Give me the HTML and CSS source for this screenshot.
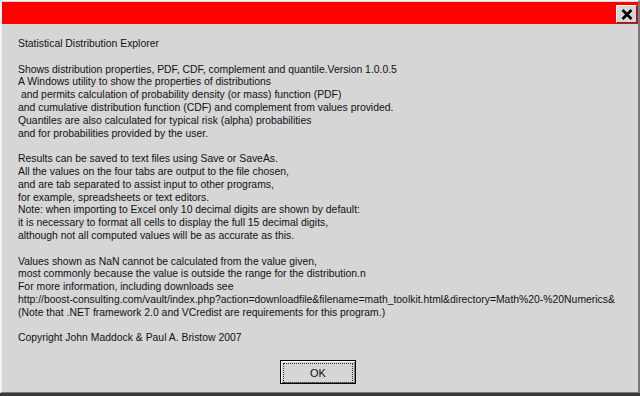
FILE: index.html
```html
<!DOCTYPE html>
<html lang="en">
<head>
    <meta charset="UTF-8">
    <title>About Statistical Distribution Explorer</title>
    <link rel="stylesheet" href="styles.css">
</head>
<body>
    <div class="window">
        <div class="titlebar">
            <button class="close-btn" aria-label="Close">
                <svg width="12" height="11" viewBox="0 0 12 11">
                    <path d="M1.5 1 L10.5 10 M10.5 1 L1.5 10" stroke="#000" stroke-width="2.6" fill="none"/>
                </svg>
            </button>
        </div>

        <div class="content">
            <p>Statistical Distribution Explorer</p>

            <p>Shows distribution properties, PDF, CDF, complement and quantile.Version 1.0.0.5<br>
            A Windows utility to show the properties of distributions<br>
            &nbsp;and permits calculation of probability density (or mass) function (PDF)<br>
            and cumulative distribution function (CDF) and complement from values provided.<br>
            Quantiles are also calculated for typical risk (alpha) probabilities<br>
            and for probabilities provided by the user.</p>

            <p>Results can be saved to text files using Save or SaveAs.<br>
            All the values on the four tabs are output to the file chosen,<br>
            and are tab separated to assist input to other programs,<br>
            for example, spreadsheets or text editors.<br>
            Note: when importing to Excel only 10 decimal digits are shown by default:<br>
            it is necessary to format all cells to display the full 15 decimal digits,<br>
            although not all computed values will be as accurate as this.</p>

            <p>Values shown as NaN cannot be calculated from the value given,<br>
            most commonly because the value is outside the range for the distribution.n<br>
            For more information, including downloads see<br>
            http://boost-consulting.com/vault/index.php?action=downloadfile&amp;filename=math_toolkit.html&amp;directory=Math%20-%20Numerics&amp;<br>
            (Note that .NET framework 2.0 and VCredist are requirements for this program.)</p>

            <p>Copyright John Maddock &amp; Paul A. Bristow 2007</p>
        </div>

        <div class="actions">
            <button class="ok-btn"><span>OK</span></button>
        </div>
    </div>
</body>
</html>
```

FILE: styles.css
```css
:root {
    --face-color: #d6d6d6;
    --light-edge: #f4f4f4;
    --dark-edge: #7a7a7a;
    --title-color: #ff0000;
    --text-color: #111111;
}
html, body {
    margin: 0;
    padding: 0;
}
body {
    width: 640px;
    height: 396px;
    overflow: hidden;
    background: #3a3a3a;
    font-family: 'Liberation Sans', Arial, sans-serif;
    color: var(--text-color);
}
.window {
    box-sizing: border-box;
    width: 640px;
    height: 393px;
    background-color: var(--face-color);
    border-left: 2px solid var(--light-edge);
    border-top: 1px solid var(--light-edge);
    border-right: 2px solid var(--dark-edge);
    border-bottom: 1px solid var(--dark-edge);
    display: flex;
    flex-direction: column;
}
.titlebar {
    height: 22px;
    margin: 1px 0 0 0;
    background-color: var(--title-color);
    display: flex;
    justify-content: flex-end;
    align-items: center;
    padding-right: 1px;
}
.close-btn {
    box-sizing: border-box;
    width: 21px;
    height: 18px;
    margin-top: 2px;
    padding: 0;
    background-color: var(--face-color);
    border: 1px solid;
    border-color: #ffffff #404040 #404040 #ffffff;
    display: flex;
    align-items: center;
    justify-content: center;
}
.content {
    padding: 14px 0 0 16px;
    font-size: 10.4px;
    line-height: 12.8px;
    white-space: nowrap;
}
.content p {
    margin: 0 0 12.8px 0;
}
.actions {
    display: flex;
    justify-content: center;
    padding-top: 2px;
    padding-right: 4px;
}
.ok-btn {
    box-sizing: border-box;
    width: 76px;
    height: 24px;
    padding: 2px;
    background-color: var(--face-color);
    border: 1px solid #000000;
    box-shadow: inset 1px 1px 0 #ffffff, inset -1px -1px 0 #808080;
    font-family: 'Liberation Sans', Arial, sans-serif;
    font-size: 11px;
    color: var(--text-color);
}
.ok-btn span {
    display: flex;
    align-items: center;
    justify-content: center;
    height: 100%;
    border: 1px dotted #333333;
}
```
